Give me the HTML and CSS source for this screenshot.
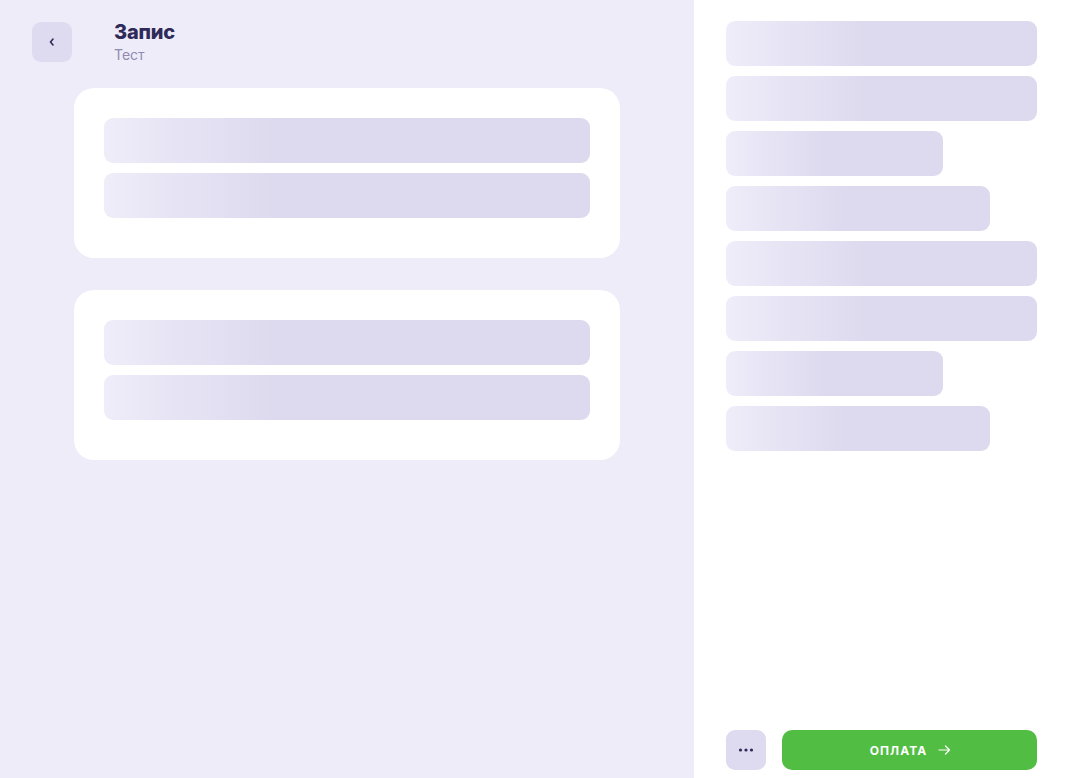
FILE: index.html
```html
<!DOCTYPE html>
<html lang="uk">
<head>
<meta charset="utf-8">
<title>Запис</title>
<link rel="stylesheet" href="styles.css">
</head>
<body>
<div class="app">
  <main class="left">
    <header class="header">
      <button class="back" aria-label="Назад">
        <svg width="8" height="10" viewBox="0 0 8 10"><path d="M5 2 L2.5 5 L5 8" fill="none" stroke="#2f2a5a" stroke-width="1.6" stroke-linecap="round" stroke-linejoin="round"/></svg>
      </button>
      <div class="titles">
        <h1 class="title">Запис</h1>
        <div class="subtitle">Тест</div>
      </div>
    </header>
    <section class="card">
      <div class="sk"></div>
      <div class="sk"></div>
    </section>
    <section class="card">
      <div class="sk"></div>
      <div class="sk"></div>
    </section>
  </main>
  <aside class="right">
    <div class="list">
      <div class="sk w-full"></div>
      <div class="sk w-full"></div>
      <div class="sk w-s"></div>
      <div class="sk w-m"></div>
      <div class="sk w-full"></div>
      <div class="sk w-full"></div>
      <div class="sk w-s"></div>
      <div class="sk w-m"></div>
    </div>
    <div class="footer">
      <button class="more" aria-label="Ще">
        <svg width="16" height="4" viewBox="0 0 16 4"><circle cx="2.5" cy="2" r="1.6" fill="#2f2a5a"/><circle cx="8" cy="2" r="1.6" fill="#2f2a5a"/><circle cx="13.5" cy="2" r="1.6" fill="#2f2a5a"/></svg>
      </button>
      <button class="pay">
        <span>ОПЛАТА</span>
        <svg width="13" height="10" viewBox="0 0 13 10"><path d="M1 5 H11.5 M7.5 1 L11.5 5 L7.5 9" fill="none" stroke="#fff" stroke-width="1.2" stroke-linecap="round" stroke-linejoin="round"/></svg>
      </button>
    </div>
  </aside>
</div>
</body>
</html>
```
FILE: styles.css
```css
* { box-sizing: border-box; }
html, body { margin: 0; height: 100%; }
body {
  font-family: Inter, "Noto Sans", "Liberation Sans", sans-serif;
  background: #ffffff;
}
.app {
  display: flex;
  height: 778px;
}
.left {
  width: 694px;
  flex: none;
  background: #eeecf9;
  padding: 22px 0 0 0;
}
.header {
  display: flex;
  align-items: flex-start;
  padding-left: 32px;
  gap: 42px;
  height: 66px;
}
.back {
  width: 40px;
  height: 40px;
  border: 0;
  border-radius: 9px;
  background: #dedbf0;
  display: flex;
  align-items: center;
  justify-content: center;
  padding: 0;
}
.title {
  margin: 0;
  font-size: 20px;
  line-height: 20px;
  font-weight: 800;
  color: #2f2a5a;
  letter-spacing: -0.2px;
}
.subtitle {
  margin-top: 4px;
  font-size: 14px;
  line-height: 18px;
  color: #8f8bb0;
}
.card {
  margin: 0 0 32px 74px;
  width: 546px;
  background: #ffffff;
  border-radius: 20px;
  padding: 30px 30px 40px;
  display: flex;
  flex-direction: column;
  gap: 10px;
}
.sk {
  height: 45px;
  border-radius: 9px;
  background: linear-gradient(90deg, #efedf9 0%, #e6e4f4 15%, #dddaef 35%, #dddaef 100%);
}
.right {
  flex: 1;
  display: flex;
  flex-direction: column;
  padding: 21px 31px 8px 32px;
}
.list {
  display: flex;
  flex-direction: column;
  gap: 10px;
}
.w-full { width: 311px; }
.w-s { width: 217px; }
.w-m { width: 264px; }
.right .sk {
  background: linear-gradient(90deg, #efedf9 0%, #e6e4f4 20%, #dddaef 45%, #dddaef 100%);
}
.footer {
  margin-top: auto;
  display: flex;
  gap: 16px;
}
.more {
  width: 40px;
  height: 40px;
  border: 0;
  border-radius: 9px;
  background: #dedbf0;
  display: flex;
  align-items: center;
  justify-content: center;
  padding: 0;
}
.pay {
  flex: 1;
  height: 40px;
  border: 0;
  border-radius: 10px;
  background: #52bd43;
  color: #ffffff;
  font-family: Inter, "Noto Sans", "Liberation Sans", sans-serif;
  font-size: 12px;
  font-weight: 700;
  letter-spacing: 1.1px;
  display: flex;
  align-items: center;
  justify-content: center;
  gap: 11px;
  padding: 0 0 0 2px;
}
```
